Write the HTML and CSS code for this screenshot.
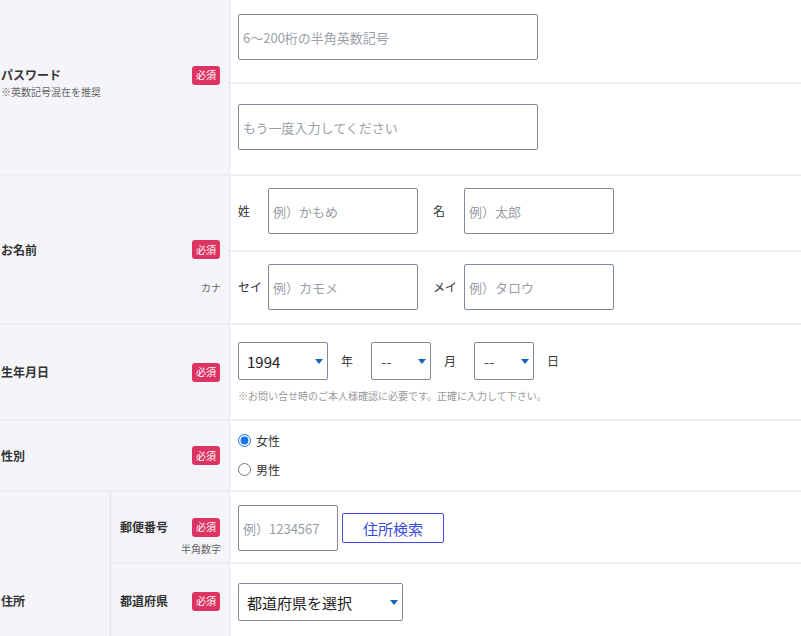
FILE: index.html
```html
<!DOCTYPE html>
<html lang="ja">
<head>
<meta charset="utf-8">
<title>会員登録</title>
<link rel="stylesheet" href="styles.css">
</head>
<body>
<div class="form">
  <div class="row">
    <div class="label label--pw">
      <div class="label-head"><span class="label-title">パスワード</span><span class="badge">必須</span></div>
      <div class="label-note">※英数記号混在を推奨</div>
    </div>
    <div class="content">
      <div class="sub sub--pw1"><input class="input input--wide" type="password" placeholder="6〜200桁の半角英数記号"></div>
      <div class="sub sub--pw2"><input class="input input--wide" type="password" placeholder="もう一度入力してください"></div>
    </div>
  </div>

  <div class="row">
    <div class="label label--grid">
      <div class="label-head label-head--mid"><span class="label-title">お名前</span><span class="badge">必須</span></div>
      <div class="label-aside label-aside--kana">カナ</div>
    </div>
    <div class="content">
      <div class="sub sub--name1">
        <div class="name-field"><span class="field-label">姓</span><input class="input input--name" type="text" placeholder="例）かもめ"></div>
        <div class="name-field name-field--second"><span class="field-label">名</span><input class="input input--name" type="text" placeholder="例）太郎"></div>
      </div>
      <div class="sub sub--name2">
        <div class="name-field"><span class="field-label">セイ</span><input class="input input--name" type="text" placeholder="例）カモメ"></div>
        <div class="name-field name-field--second"><span class="field-label">メイ</span><input class="input input--name" type="text" placeholder="例）タロウ"></div>
      </div>
    </div>
  </div>

  <div class="row">
    <div class="label">
      <div class="label-head"><span class="label-title">生年月日</span><span class="badge">必須</span></div>
    </div>
    <div class="content content--birth">
      <div class="date-line">
        <span class="select-wrap select-wrap--year"><select class="select select--value"><option>1994</option></select></span>
        <span class="unit">年</span>
        <span class="select-wrap select-wrap--small"><select class="select select--empty"><option>--</option></select></span>
        <span class="unit">月</span>
        <span class="select-wrap select-wrap--small"><select class="select select--empty"><option>--</option></select></span>
        <span class="unit">日</span>
      </div>
      <p class="note">※お問い合せ時のご本人様確認に必要です。正確に入力して下さい。</p>
    </div>
  </div>

  <div class="row">
    <div class="label">
      <div class="label-head"><span class="label-title">性別</span><span class="badge">必須</span></div>
    </div>
    <div class="content content--gender">
      <label class="radio"><input type="radio" name="sex" checked><span>女性</span></label>
      <label class="radio"><input type="radio" name="sex"><span>男性</span></label>
    </div>
  </div>

  <div class="row row--address">
    <div class="label label--address"><span class="label-title">住所</span></div>
    <div class="address-body">
      <div class="address-sub address-sub--zip">
        <div class="sublabel label--grid">
          <div class="label-head label-head--mid"><span class="label-title">郵便番号</span><span class="badge">必須</span></div>
          <div class="label-aside label-aside--zip">半角数字</div>
        </div>
        <div class="sub-content sub-content--zip">
          <input class="input input--zip" type="text" placeholder="例）1234567">
          <button class="search-btn" type="button">住所検索</button>
        </div>
      </div>
      <div class="address-sub address-sub--pref">
        <div class="sublabel">
          <div class="label-head"><span class="label-title">都道府県</span><span class="badge">必須</span></div>
        </div>
        <div class="sub-content sub-content--pref">
          <span class="select-wrap select-wrap--pref"><select class="select select--value"><option>都道府県を選択</option></select></span>
        </div>
      </div>
    </div>
  </div>
</div>
</body>
</html>
```

FILE: styles.css
```css
html, body {
  margin: 0;
  padding: 0;
}
body {
  height: 636px;
  overflow: hidden;
  background: #ffffff;
  font-family: "Noto Sans CJK JP", "Noto Sans", sans-serif;
  color: #333333;
}
.form {
  width: 801px;
}
.row {
  display: flex;
  border-bottom: 2px solid #ececf1;
}
.label {
  width: 230px;
  flex: none;
  box-sizing: border-box;
  background: #f5f5f9;
  border-right: 1px solid #e3e3e9;
  padding: 0 8px 0 1px;
  display: flex;
  flex-direction: column;
  justify-content: center;
}
.label--pw {
  padding-bottom: 10px;
}
.label--grid {
  display: grid;
  grid-template-columns: minmax(0, 1fr);
  grid-template-rows: 1fr auto 1fr;
  justify-content: stretch;
}
.label-head {
  display: flex;
  justify-content: space-between;
  align-items: center;
  height: 20px;
}
.label-head--mid {
  grid-row: 2;
}
.label-title {
  font-size: 12px;
  font-weight: 700;
  line-height: 20px;
  color: #333333;
}
.badge {
  display: inline-flex;
  align-items: center;
  justify-content: center;
  width: 28px;
  height: 19px;
  margin-right: 1px;
  border-radius: 3px;
  background: #de3464;
  color: #ffffff;
  font-size: 10px;
  line-height: 1;
}
.label-note {
  font-size: 10px;
  line-height: 14px;
  color: #666666;
}
.label-aside {
  grid-row: 3;
  align-self: start;
  text-align: right;
  font-size: 10px;
  line-height: 14px;
  color: #666666;
}
.label-aside--kana {
  margin-top: 21px;
}
.label-aside--zip {
  margin-top: 5px;
}
.content {
  flex: 1;
  padding-left: 8px;
}
.sub {
  margin-left: -8px;
  padding-left: 8px;
  display: flex;
  align-items: center;
}
.sub--pw1 {
  padding-top: 14px;
  padding-bottom: 22px;
  border-bottom: 2px solid #ececf1;
}
.sub--pw2 {
  padding-top: 20px;
  padding-bottom: 24px;
}
.sub--name1 {
  padding-top: 12px;
  padding-bottom: 16px;
  border-bottom: 2px solid #ececf1;
}
.sub--name2 {
  padding-top: 12px;
  padding-bottom: 13px;
}
.input {
  box-sizing: border-box;
  height: 46px;
  border: 1px solid #7f8b97;
  border-radius: 2px;
  padding: 0 4px;
  font-family: "Noto Sans CJK JP", "Noto Sans", sans-serif;
  font-size: 13px;
  color: #333333;
  background: #ffffff;
  outline: none;
}
.input::placeholder {
  color: #9a9ea5;
}
.input--wide {
  width: 300px;
}
.input--name {
  width: 150px;
}
.input--zip {
  width: 100px;
}
.name-field {
  display: flex;
  align-items: center;
}
.name-field--second {
  margin-left: 15px;
}
.field-label {
  width: 30px;
  font-size: 12px;
  line-height: 20px;
  color: #333333;
}
.name-field--second .field-label {
  width: 31px;
}
.content--birth {
  padding-top: 17px;
  padding-bottom: 15px;
}
.date-line {
  display: flex;
  align-items: center;
}
.select-wrap {
  position: relative;
  display: inline-block;
  height: 38px;
}
.select-wrap::after {
  content: "";
  position: absolute;
  right: 5px;
  top: 17px;
  border-left: 4px solid transparent;
  border-right: 4px solid transparent;
  border-top: 5px solid #1666c0;
  pointer-events: none;
}
.select-wrap--year { width: 90px; }
.select-wrap--small { width: 60px; }
.select-wrap--pref { width: 165px; }
.select {
  appearance: none;
  -webkit-appearance: none;
  box-sizing: border-box;
  width: 100%;
  height: 38px;
  border: 1px solid #7f8b97;
  border-radius: 2px;
  background: #ffffff;
  padding: 0 0 0 8px;
  font-family: "Noto Sans CJK JP", "Noto Sans", sans-serif;
  font-size: 15px;
  outline: none;
}
.select--value {
  color: #222222;
}
.select--empty {
  color: #555555;
  padding-left: 9px;
}
.unit {
  font-size: 12px;
  line-height: 20px;
  color: #333333;
  margin: 0 18px 0 13px;
}
.note {
  margin: 8px 0 0;
  font-size: 10px;
  line-height: 16px;
  color: #999999;
}
.content--gender {
  padding-top: 9px;
  padding-bottom: 11px;
  display: flex;
  flex-direction: column;
  gap: 9px;
}
.radio {
  display: flex;
  align-items: center;
  height: 20px;
  font-size: 12px;
  color: #333333;
}
.radio input {
  margin: 0 5px 0 0;
  width: 13px;
  height: 13px;
  accent-color: #1a73e8;
}
.row--address {
  align-items: stretch;
}
.label--address {
  width: 111px;
  padding-top: 72px;
  padding-bottom: 0;
}
.address-body {
  flex: 1;
  display: flex;
  flex-direction: column;
}
.address-sub {
  display: flex;
  border-bottom: 2px solid #ececf1;
}
.address-sub:last-child {
  border-bottom: none;
}
.sublabel {
  width: 119px;
  flex: none;
  box-sizing: border-box;
  background: #f5f5f9;
  border-right: 1px solid #e3e3e9;
  padding: 0 8px 0 9px;
  display: flex;
  flex-direction: column;
  justify-content: center;
}
.sublabel.label--grid {
  display: grid;
  grid-template-columns: minmax(0, 1fr);
  grid-template-rows: 1fr auto 1fr;
  justify-content: stretch;
}
.sub-content {
  flex: 1;
  display: flex;
  align-items: center;
  padding-left: 8px;
}
.sub-content--zip {
  padding-top: 13px;
  padding-bottom: 11px;
  gap: 4px;
}
.sub-content--pref {
  padding-top: 19px;
  padding-bottom: 17px;
}
.search-btn {
  box-sizing: border-box;
  width: 102px;
  height: 30px;
  border: 1px solid #3d4fe0;
  border-radius: 2px;
  background: #ffffff;
  color: #3a4cd6;
  font-family: "Noto Sans CJK JP", "Noto Sans", sans-serif;
  font-size: 15px;
  padding: 0;
  cursor: pointer;
}
```
